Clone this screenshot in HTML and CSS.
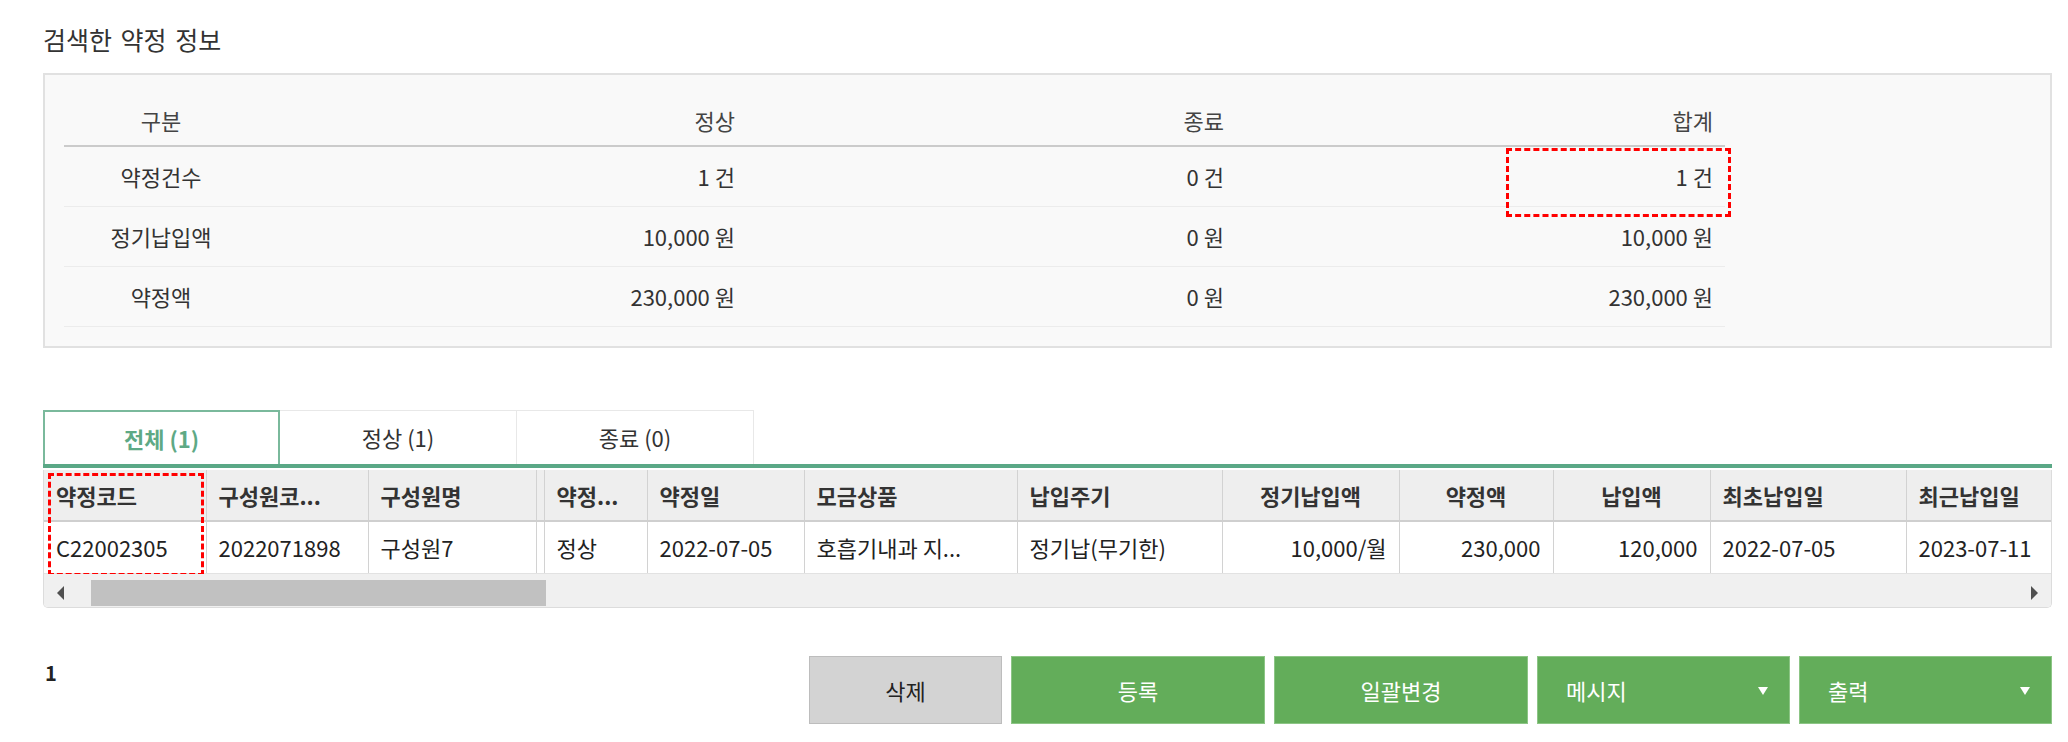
FILE: index.html
```
<html>
<head>
<meta charset="utf-8">
<link rel="stylesheet" href="styles.css">
</head>
<body>
<div class="page">

<h2 class="section-title">검색한 약정 정보</h2>

<div class="summary">
<table class="summary-table">
  <colgroup>
    <col class="c-label"><col class="c-num"><col class="c-num"><col class="c-num">
  </colgroup>
  <thead>
    <tr><th class="label">구분</th><th>정상</th><th>종료</th><th>합계</th></tr>
  </thead>
  <tbody>
    <tr><td class="label">약정건수</td><td>1 건</td><td>0 건</td><td class="marked">1 건<span class="mark mark-total"></span></td></tr>
    <tr><td class="label">정기납입액</td><td>10,000 원</td><td>0 원</td><td>10,000 원</td></tr>
    <tr><td class="label">약정액</td><td>230,000 원</td><td>0 원</td><td>230,000 원</td></tr>
  </tbody>
</table>
</div>

<div class="tabs">
  <div class="tab active">전체 (1)</div>
  <div class="tab">정상 (1)</div>
  <div class="tab">종료 (0)</div>
</div>

<div class="grid">
  <div class="grid-view">
    <table class="grid-table">
      <colgroup>
        <col style="width:162px"><col style="width:162px"><col style="width:168px"><col style="width:8px">
        <col style="width:103px"><col style="width:157px"><col style="width:213px"><col style="width:205px">
        <col style="width:177px"><col style="width:154px"><col style="width:157px"><col style="width:196px">
        <col style="width:160px">
      </colgroup>
      <thead>
        <tr>
          <th>약정코드</th><th>구성원코...</th><th>구성원명</th><th class="freeze"></th>
          <th>약정...</th><th>약정일</th><th>모금상품</th><th>납입주기</th>
          <th class="center">정기납입액</th><th class="center">약정액</th><th class="center">납입액</th>
          <th>최초납입일</th><th>최근납입일</th>
        </tr>
      </thead>
      <tbody>
        <tr>
          <td>C22002305</td><td>2022071898</td><td>구성원7</td><td class="freeze"></td>
          <td>정상</td><td>2022-07-05</td><td>호흡기내과 지...</td><td>정기납(무기한)</td>
          <td class="num">10,000/월</td><td class="num">230,000</td><td class="num">120,000</td>
          <td>2022-07-05</td><td>2023-07-11</td>
        </tr>
      </tbody>
    </table>
    <span class="mark mark-code"></span>
  </div>
  <div class="hscroll">
    <span class="arrow arrow-left"></span>
    <span class="thumb"></span>
    <span class="arrow arrow-right"></span>
  </div>
</div>

<div class="footer">
  <div class="count">1</div>
  <div class="actions">
    <button class="btn btn-gray">삭제</button>
    <button class="btn btn-green">등록</button>
    <button class="btn btn-green">일괄변경</button>
    <button class="btn btn-green btn-drop">메시지<span class="caret"></span></button>
    <button class="btn btn-green btn-drop">출력<span class="caret"></span></button>
  </div>
</div>

</div>
</body>
</html>
```
FILE: styles.css
```
body{
margin:0;padding:0;
font-family:"Noto Sans CJK KR","Malgun Gothic",sans-serif;
color:#333;
background:#fff;
}
.page{
padding:28px 16px 0 43px;
}
.section-title{
margin:0;
font-size:25px;
font-weight:normal;
line-height:22px;
word-spacing:3px;
}

/* summary box */
.summary{
margin-top:23px;
border:2px solid #e1e1e1;
background:#f9f9f9;
padding:20px 20px 19px 19px;
}
.summary-table{
border-collapse:collapse;
table-layout:fixed;
width:1661px;
font-size:22px;
}
.c-label{width:194px;}
.c-num{width:489px;}
.summary-table th{
height:51px;
font-weight:normal;
color:#444;
text-align:right;
padding:0 12px;
border-bottom:2px solid #cbcbcb;
}
.summary-table td{
height:60px;
text-align:right;
padding:0 12px;
border-bottom:1px solid #ececec;
}
.summary-table .label{text-align:center;}
.marked{position:relative;}

.mark{
position:absolute;
border:3px dashed #f00;
box-sizing:border-box;
pointer-events:none;
}
.mark-total{
right:-6px;top:1px;
width:225px;height:69px;
}

/* tabs */
.tabs{
display:flex;
margin-top:62px;
border-bottom:4px solid #5aa886;
}
.tab{
width:237px;height:54px;
box-sizing:border-box;
display:flex;align-items:center;justify-content:center;
border:1px solid #e8e8e8;border-bottom:none;
font-size:22px;
color:#333;
}
.tab + .tab{border-left:none;}
.tab.active{
border:2px solid #7ab99c;border-bottom:none;
color:#5ea985;
font-weight:bold;
}

/* grid */
.grid{
margin-top:2px;
border:1px solid #dcdcdc;
border-top:none;
border-radius:0 0 5px 5px;
overflow:hidden;
}
.grid-view{
position:relative;
overflow:hidden;
}
.grid-table{
border-collapse:collapse;
table-layout:fixed;
width:2022px;
font-size:22px;
color:#222;
}
.grid-table th,.grid-table td{
padding:0 12px;
text-align:left;
white-space:nowrap;
overflow:hidden;
border-right:1px solid #d2d2d2;
}
.grid-table th{
height:51px;
background:#eee;
font-weight:bold;
color:#333;
border-bottom:2px solid #cfcfcf;
}
.grid-table td{
height:53px;
background:#fff;
border-bottom:1px solid #e2e2e2;
}
.grid-table .freeze{padding:0;border-left:1px solid #d2d2d2;}
.grid-table th.freeze{background:#eee;}
.grid-table .center{text-align:center;}
.grid-table .num{text-align:right;}
.mark-code{
left:4px;top:3px;
width:156px;height:103px;
}

.hscroll{
display:flex;
align-items:flex-start;
height:33px;
background:#f0f0f0;
}
.arrow{
width:0;height:0;
margin-top:12px;
border-top:7px solid transparent;
border-bottom:7px solid transparent;
}
.arrow-left{
border-right:7px solid #505050;
margin-left:13px;margin-right:27px;
}
.thumb{
margin-top:6px;
width:455px;height:26px;
background:#c1c1c1;
}
.arrow-right{
border-left:7px solid #505050;
margin-left:auto;margin-right:13px;
}

/* footer */
.footer{
display:flex;
justify-content:space-between;
align-items:flex-start;
margin-top:48px;
}
.count{
font-weight:bold;
font-size:20px;
line-height:20px;
margin-top:7px;
padding-left:2px;
color:#222;
}
.actions{
display:flex;
gap:9px;
}
.btn{
height:68px;width:254px;
font-family:inherit;
font-size:22px;
border:1px solid #8cc585;
background:#63ad5a;
color:#fff;
padding:0;
}
.btn-gray{
width:193px;
background:#d3d3d3;
border-color:#bdbdbd;
color:#222;
}
.btn-drop{
width:253px;
position:relative;
text-align:left;
padding-left:28px;
}
.caret{
position:absolute;
right:21px;top:30px;
border-left:5px solid transparent;
border-right:5px solid transparent;
border-top:8px solid #fff;
}
```
